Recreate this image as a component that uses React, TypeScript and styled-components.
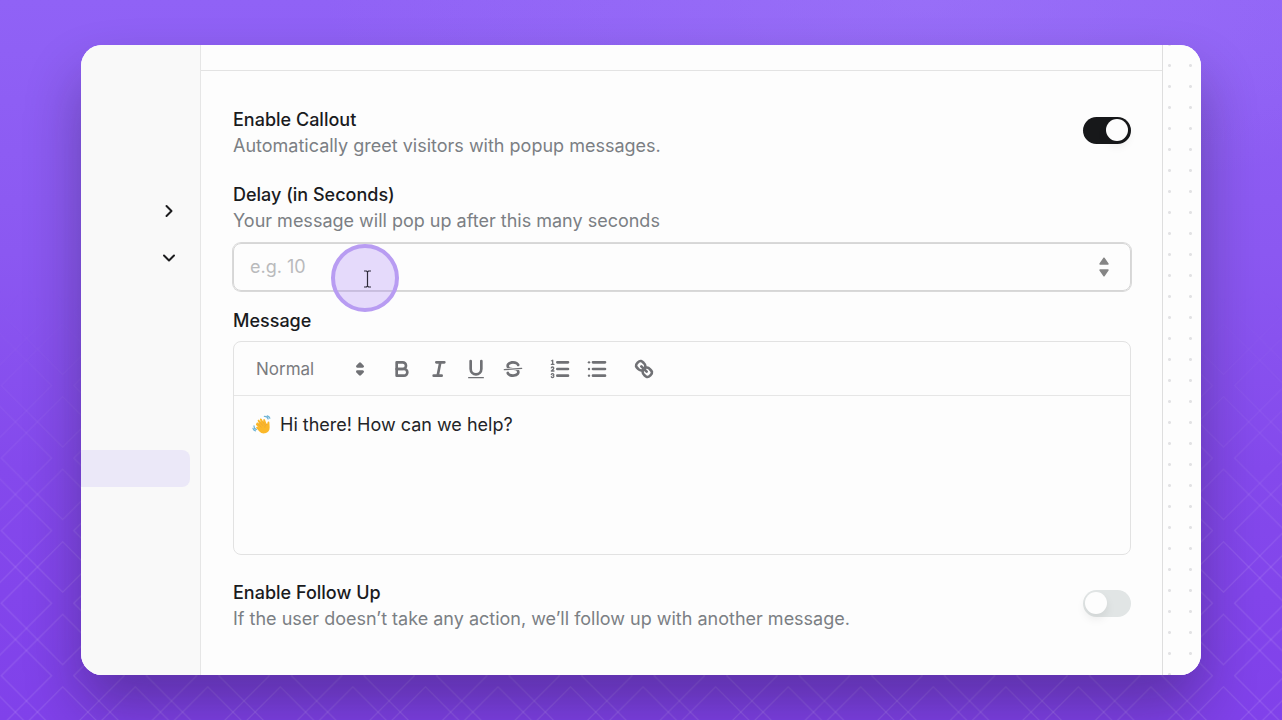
import React, { useState } from "react";
import styled, { createGlobalStyle } from "styled-components";
import { ChevronDown, ChevronRight } from "lucide-react";

const GlobalStyle = createGlobalStyle`
  *, *::before, *::after { box-sizing: border-box; }
  html, body { margin: 0; padding: 0; }
  body { font-family: Inter, "Liberation Sans", sans-serif; color: #18181b; }
  button, input, select, textarea { font: inherit; color: inherit; }
`;

const Stage = styled.main`
  position: relative;
  display: flex;
  min-height: 100vh;
  padding: 45px 81px;
  background:
    radial-gradient(ellipse 600px 200px at 72% 0%, rgba(165, 130, 250, 0.38), rgba(160, 125, 252, 0)),
    linear-gradient(180deg, #9062f6 0%, #8b58f1 35%, #8449ec 65%, #8041ea 100%);
`;

const Backdrop = styled.svg`
  position: absolute;
  inset: 0;
  width: 100%;
  height: 100%;
  pointer-events: none;
`;

const CardShadow = styled.div`
  position: relative;
  display: flex;
  flex: 1;
  min-width: 0;
  border-radius: 21px;
  box-shadow: 0 32px 56px rgba(20, 15, 30, 0.32);
`;

const Card = styled.div`
  display: flex;
  flex: 1;
  min-width: 0;
  overflow: hidden;
  border-radius: 21px;
  background: #fdfdfd;
`;

const Sidebar = styled.nav`
  display: flex;
  flex-direction: column;
  flex: none;
  width: 120px;
  padding: 156px 10px 0 0;
  border-right: 1px solid #e6e6e6;
  background: #f9f9f9;
`;

const Disclosure = styled.button`
  display: flex;
  align-self: flex-end;
  margin: 0 11px 27px 0;
  padding: 0;
  border: 0;
  background: none;
  color: #1c1c1e;
`;

const ActiveLink = styled.a`
  height: 37px;
  margin-top: 155px;
  border-radius: 0 8px 8px 0;
  background: #ebe8f8;
`;

const Panel = styled.section`
  display: flex;
  flex-direction: column;
  flex: 1;
  min-width: 0;
`;

const PanelHeader = styled.header`
  height: 26px;
  border-bottom: 1px solid #e3e3e3;
`;

const Form = styled.form`
  display: flex;
  flex-direction: column;
  padding: 36px 31px 40px 32px;
`;

const ToggleRow = styled.div`
  display: flex;
  align-items: flex-start;
  justify-content: space-between;
  gap: 24px;
`;

const Field = styled.div<{ $top: number }>`
  display: flex;
  flex-direction: column;
  margin-top: ${(p) => p.$top}px;
`;

const Label = styled.label`
  display: block;
  font-size: 18px;
  line-height: 26px;
  font-weight: 500;
  color: #1a1b1e;
`;

const Hint = styled.p`
  margin: 0;
  font-size: 18px;
  line-height: 26px;
  color: #7b7f84;
`;

const Switch = styled.input`
  appearance: none;
  position: relative;
  flex: none;
  width: 48px;
  height: 27px;
  margin: 10px 0 0;
  border-radius: 14px;
  background: #e1e5e5;

  &::before {
    content: "";
    position: absolute;
    top: 2px;
    left: 2px;
    width: 22px;
    height: 22px;
    border-radius: 50%;
    background: #fdfdfd;
    box-shadow: 0 5px 10px rgba(0, 0, 0, 0.08);
  }

  &:checked { background: #17181a; }
  &:checked::before { left: 23px; }
`;

const NumberBox = styled.div`
  display: flex;
  align-items: center;
  height: 48px;
  margin-top: 9px;
  padding: 0 21px 0 16px;
  border: 1px solid #d6d6d6;
  border-radius: 8px;
  box-shadow: 0 0 0 1px #d9d9d9;
`;

const NumberInput = styled.input`
  flex: 1;
  min-width: 0;
  padding: 0;
  border: 0;
  outline: 0;
  background: none;
  font-size: 18px;
  line-height: 26px;
  appearance: textfield;

  &::placeholder { color: #b9babc; opacity: 1; }
  &::-webkit-inner-spin-button { appearance: none; }
`;

const Stepper = styled.div`
  display: flex;
  flex-direction: column;
  gap: 4px;
`;

const StepButton = styled.button`
  display: flex;
  padding: 0;
  border: 0;
  background: none;
`;

const Editor = styled.div`
  display: flex;
  flex-direction: column;
  height: 214px;
  margin-top: 7px;
  border: 1px solid #e2e2e2;
  border-radius: 8px;
`;

const Toolbar = styled.div`
  display: flex;
  align-items: center;
  gap: 10px;
  height: 54px;
  padding-left: 22px;
  border-bottom: 1px solid #e6e6e6;
  color: #707175;
`;

const ToolGroup = styled.div`
  display: flex;
`;

const ToolButton = styled.button`
  display: flex;
  align-items: center;
  justify-content: center;
  width: 37px;
  height: 32px;
  padding: 0;
  border: 0;
  background: none;
  color: inherit;
`;

const ToolIcon = styled.svg`
  width: 24px;
  height: 24px;
  fill: none;
  stroke: currentColor;
  stroke-width: 2;
  stroke-linecap: round;
  stroke-linejoin: round;

  .thin { stroke-width: 1; }
  .fill { fill: currentColor; stroke: none; }
`;

const Picker = styled.div`
  display: flex;
  align-items: center;
  width: 117px;
  padding-right: 1px;
`;

const PickerSelect = styled.select`
  appearance: none;
  flex: 1;
  min-width: 0;
  padding: 0;
  border: 0;
  background: none;
  font-size: 17px;
  line-height: 26px;
  color: #7a7b7f;
`;

const Body = styled.div`
  flex: 1;
  padding: 16px 18px;
  outline: 0;
  font-size: 18px;
  line-height: 26px;
  color: #232427;
`;

const Wave = styled.svg`
  width: 21px;
  height: 21px;
  margin-right: 7px;
  vertical-align: -4px;
`;

const DotCanvas = styled.aside`
  flex: none;
  width: 39px;
  border-left: 1px solid #dedede;
  background-color: #fdfdfd;
  background-image: radial-gradient(circle, #e2e2e4 1px, transparent 2px);
  background-size: 21px 21px;
  background-position: -4px 10px;
`;

const ClickMarker = styled.div`
  position: absolute;
  top: 244px;
  left: 331px;
  display: flex;
  align-items: center;
  justify-content: center;
  width: 68px;
  height: 68px;
  padding: 2px 0 0 5px;
  border: 4px solid #b89cf2;
  border-radius: 50%;
  background: rgba(160, 115, 248, 0.25);
  pointer-events: none;
`;

function Diamonds() {
  const steps = [-1, 0, 1];
  return (
    <Backdrop aria-hidden="true">
      <defs>
        <pattern id="diamonds" x="26.4" y="59.1" width="72.55" height="72.55" patternUnits="userSpaceOnUse">
          {steps.flatMap((i) =>
            steps.map((j) => (
              <path
                key={`${i}${j}`}
                transform={`translate(${36.3 + i * 72.55} ${36.3 + j * 72.55})`}
                d="M0-61.5 61.5 0 0 61.5-61.5 0Z"
                fill="none"
                stroke="#b58cf5"
                strokeOpacity="0.27"
                strokeWidth="1.3"
              />
            ))
          )}
        </pattern>
        <linearGradient id="fade" x1="0" y1="0" x2="0" y2="1">
          <stop offset="0.4" stopColor="#fff" stopOpacity="0" />
          <stop offset="0.8" stopColor="#fff" stopOpacity="1" />
        </linearGradient>
        <mask id="fadeMask">
          <rect width="100%" height="100%" fill="url(#fade)" />
        </mask>
      </defs>
      <rect width="100%" height="100%" fill="url(#diamonds)" mask="url(#fadeMask)" />
    </Backdrop>
  );
}

function WaveEmoji() {
  return (
    <Wave viewBox="0 0 22 22" role="img" aria-label="Waving hand">
      <path
        d="M4.8 10.2c-.5-.9.7-1.8 1.5-1l1.2 1.1-1.5-3c-.5-1.1.9-1.9 1.6-.9L9.100 8.400 8.300 5.800c-.3-1.100 1.300-1.700 1.900-.6l1.500 2.900.1-2.100c.1-1.100 1.500-1.200 1.800-.1l1.300 3.400.9 1.400.6-2.200c.3-1 1.900-.8 1.800.4l.3 5.100c.2 3.200-1.800 5.600-4.700 6.200-2.300.5-4.500-.2-6-1.900l-3.200-3.300c-.8-.9.3-2 1.300-1.300l.9.500-2.500-2.700c-.7-.9.5-1.900 1.300-1.200z"
        fill="#fbb829"
      />
      <path
        d="M6.600 10.500l3 3.200M8.700 9l2.600 3.100M11.500 8.200l1.500 2.600M15.800 10.800c-1.800.2-2.700 1.600-2.300 3.200"
        fill="none"
        stroke="#e9a03a"
        strokeWidth=".7"
        strokeLinecap="round"
      />
      <path
        d="M13 2.600c1.900-.1 3.200.8 3.900 2.600M16 1.900c1.400.3 2.300 1.200 2.700 2.500M2.100 12.400c-.1 1.900.8 3.200 2.500 3.800M1 15c.4 1.400 1.400 2.300 2.700 2.600"
        fill="none"
        stroke="#6fb4d6"
        strokeWidth="1.300"
        strokeLinecap="round"
      />
    </Wave>
  );
}

const icons: Record<string, React.ReactNode> = {
  Bold: (
    <>
      <path d="M5,4H9.500A2.500,2.500,0,0,1,12,6.500v0A2.500,2.500,0,0,1,9.500,9H5V4Z" />
      <path d="M5,9h5.500A2.500,2.500,0,0,1,13,11.500v0A2.500,2.500,0,0,1,10.500,14H5V9Z" />
    </>
  ),
  Italic: <path d="M7 4H13M5 14H11M8 14L10 4" />,
  Underline: (
    <>
      <path d="M5,3V9a4.012,4.012,0,0,0,4,4H9a4.012,4.012,0,0,0,4-4V3" />
      <rect className="fill" x="3" y="15" width="12" height="1" rx=".5" />
    </>
  ),
  Strikethrough: (
    <>
      <path className="thin" d="M2.500 9.500L15.500 8.500" />
      <path
        className="fill"
        d="M9.007,8C6.542,7.791,6,7.519,6,6.500,6,5.792,7.283,5,9,5c1.571,0,2.765.679,2.969,1.309a1,1,0,0,0,1.900-.617C13.356,4.106,11.354,3,9,3,6.200,3,4,4.538,4,6.500a3.200,3.200,0,0,0,.5,1.843Z"
      />
      <path
        className="fill"
        d="M8.984,10C11.457,10.208,12,10.479,12,11.500c0,0.708-1.283,1.500-3,1.500-1.571,0-2.765-.679-2.969-1.309a1,1,0,1,0-1.900.617C4.644,13.894,6.646,15,9,15c2.800,0,5-1.538,5-3.500a3.200,3.200,0,0,0-.5-1.843Z"
      />
    </>
  ),
  "Numbered list": (
    <>
      <path d="M7 4H15M7 9H15M7 14H15" />
      <path className="thin" d="M2.500 5.500H4.500" />
      <path
        className="fill"
        d="M3.500,6A0.500,0.500,0,0,1,3,5.500V3.085l-0.276.138A0.500,0.500,0,0,1,2.053,3c-0.124-.247-0.023-0.324.224-0.447l1-.5A0.500,0.500,0,0,1,4,2.500v3A0.500,0.500,0,0,1,3.500,6Z"
      />
      <path className="thin" d="M4.500,10.500h-2c0-.234,1.850-1.076,1.850-2.234A0.959,0.959,0,0,0,2.500,8.156" />
      <path
        className="thin"
        d="M2.500,14.846a0.959,0.959,0,0,0,1.850-.109A0.700,0.700,0,0,0,3.750,14a0.688,0.688,0,0,0,.6-0.736,0.959,0.959,0,0,0-1.850-.109"
      />
    </>
  ),
  "Bulleted list": (
    <>
      <path d="M6 4H15M6 9H15M6 14H15" />
      <g className="fill">
        <circle cx="3" cy="4" r=".9" />
        <circle cx="3" cy="9" r=".9" />
        <circle cx="3" cy="14" r=".9" />
      </g>
    </>
  ),
  Link: (
    <>
      <path d="M7 7L11 11" />
      <path d="M8.900,4.577a3.476,3.476,0,0,1,.36,4.679A3.476,3.476,0,0,1,4.577,8.900C3.185,7.500,2.035,6.400,4.217,4.217S7.500,3.185,8.900,4.577Z" />
      <path d="M13.423,9.100a3.476,3.476,0,0,0-4.679-.36,3.476,3.476,0,0,0,.36,4.679c1.392,1.392,2.500,2.542,4.679.36S14.815,10.500,13.423,9.100Z" />
    </>
  ),
};

const toolGroups = [
  ["Bold", "Italic", "Underline", "Strikethrough"],
  ["Numbered list", "Bulleted list"],
  ["Link"],
];

function Triangle({ down = false }: { down?: boolean }) {
  return (
    <svg width="10" height="8" viewBox="0 0 10 8" aria-hidden="true">
      <path
        d={down ? "M1 1H9L5 6.800Z" : "M1 7H9L5 1.200Z"}
        fill="#858585"
        stroke="#858585"
        strokeWidth="1.400"
        strokeLinejoin="round"
      />
    </svg>
  );
}

export default function App() {
  const [callout, setCallout] = useState(true);
  const [followUp, setFollowUp] = useState(false);
  const [delay, setDelay] = useState("");

  const step = (by: number) => setDelay(String(Math.max(0, Number(delay) + by)));

  return (
    <>
      <GlobalStyle />
      <Stage>
        <Diamonds />
        <CardShadow>
          <Card>
            <Sidebar aria-label="Sections">
              <Disclosure type="button" aria-label="Expand section">
                <ChevronRight size={20} strokeWidth={2.4} />
              </Disclosure>
              <Disclosure type="button" aria-label="Collapse section">
                <ChevronDown size={20} strokeWidth={2.4} />
              </Disclosure>
              <ActiveLink href="#callout" aria-label="Callout" aria-current="page" />
            </Sidebar>
            <Panel>
              <PanelHeader />
              <Form onSubmit={(e) => e.preventDefault()}>
                <ToggleRow>
                  <div>
                    <Label htmlFor="callout">Enable Callout</Label>
                    <Hint>Automatically greet visitors with popup messages.</Hint>
                  </div>
                  <Switch
                    id="callout"
                    type="checkbox"
                    role="switch"
                    checked={callout}
                    onChange={(e) => setCallout(e.target.checked)}
                  />
                </ToggleRow>

                <Field $top={23}>
                  <Label htmlFor="delay">Delay (in Seconds)</Label>
                  <Hint>Your message will pop up after this many seconds</Hint>
                  <NumberBox>
                    <NumberInput
                      id="delay"
                      type="number"
                      placeholder="e.g. 10"
                      value={delay}
                      onChange={(e) => setDelay(e.target.value)}
                    />
                    <Stepper>
                      <StepButton type="button" aria-label="Increase delay" onClick={() => step(1)}>
                        <Triangle />
                      </StepButton>
                      <StepButton type="button" aria-label="Decrease delay" onClick={() => step(-1)}>
                        <Triangle down />
                      </StepButton>
                    </Stepper>
                  </NumberBox>
                </Field>

                <Field $top={17}>
                  <Label as="span" id="message-label">Message</Label>
                  <Editor>
                    <Toolbar role="toolbar" aria-label="Formatting">
                      <Picker>
                        <PickerSelect aria-label="Text style" defaultValue="Normal">
                          <option>Normal</option>
                        </PickerSelect>
                        <ToolIcon viewBox="0 0 18 18" aria-hidden="true">
                          <path d="M7 11L9 13L11 11ZM7 7L9 5L11 7Z" />
                        </ToolIcon>
                      </Picker>
                      {toolGroups.map((group) => (
                        <ToolGroup key={group[0]}>
                          {group.map((name) => (
                            <ToolButton key={name} type="button" aria-label={name}>
                              <ToolIcon viewBox="0 0 18 18" aria-hidden="true">
                                {icons[name]}
                              </ToolIcon>
                            </ToolButton>
                          ))}
                        </ToolGroup>
                      ))}
                    </Toolbar>
                    <Body
                      role="textbox"
                      aria-multiline="true"
                      aria-labelledby="message-label"
                      contentEditable
                      suppressContentEditableWarning
                      spellCheck={false}
                    >
                      <WaveEmoji />
                      Hi there! How can we help?
                    </Body>
                  </Editor>
                </Field>

                <Field $top={25}>
                  <ToggleRow>
                    <div>
                      <Label htmlFor="follow-up">Enable Follow Up</Label>
                      <Hint>If the user doesn’t take any action, we’ll follow up with another message.</Hint>
                    </div>
                    <Switch
                      id="follow-up"
                      type="checkbox"
                      role="switch"
                      checked={followUp}
                      onChange={(e) => setFollowUp(e.target.checked)}
                    />
                  </ToggleRow>
                </Field>
              </Form>
            </Panel>
            <DotCanvas />
          </Card>
        </CardShadow>
        <ClickMarker>
          <svg width="9" height="18" viewBox="0 0 9 18" aria-hidden="true">
            <path
              d="M1 1H3.500L4.500 2 5.500 1H8M4.500 2V16M1 17H3.500L4.500 16 5.500 17H8"
              fill="none"
              stroke="#2e2a3a"
              strokeWidth="1.200"
            />
          </svg>
        </ClickMarker>
      </Stage>
    </>
  );
}
